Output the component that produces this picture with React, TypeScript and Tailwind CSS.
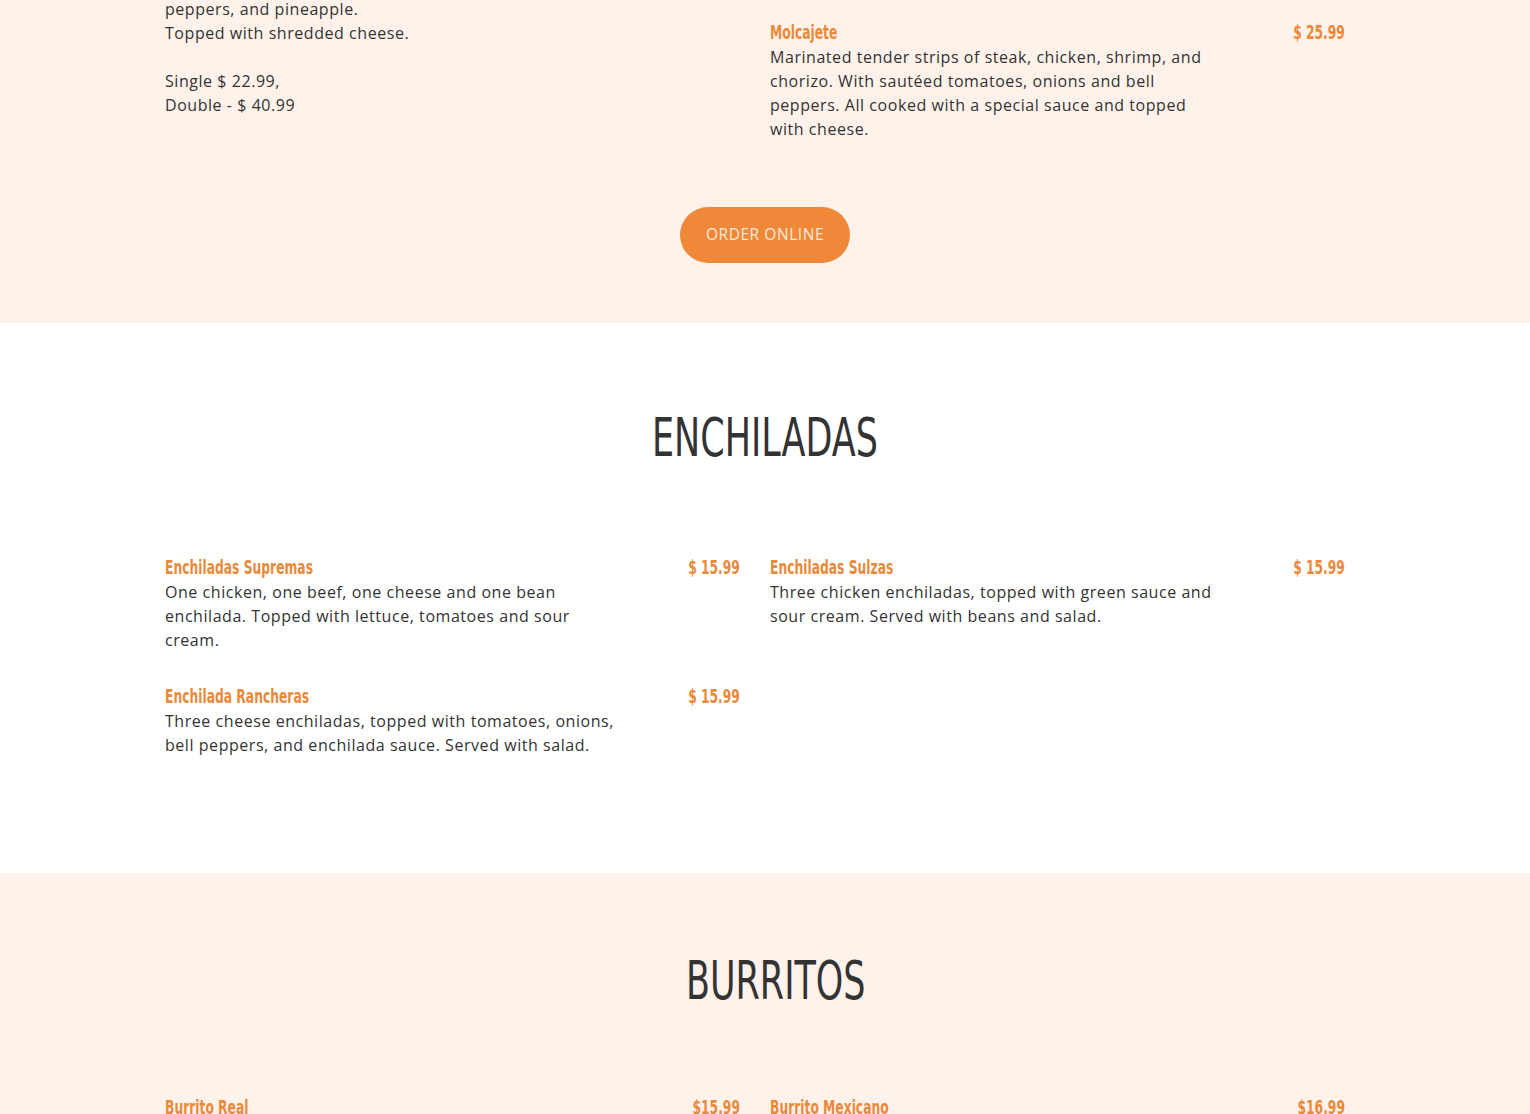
type Dish = { title: string; price: string; desc: string };

const body = "font-['Open_Sans','DejaVu_Sans',sans-serif] tracking-[0.55px]";
const cond = "font-['DejaVu_Sans',sans-serif] font-stretch-condensed";

function MenuItem({ title, price, desc }: Dish) {
  return (
    <div>
      <div className="flex items-center justify-between h-[26px]">
        <h3 className={`${cond} font-bold inline-block origin-left scale-x-[0.72] text-[19px] text-[#e98a3b] whitespace-nowrap`}>
          {title}
        </h3>
        <span className={`${cond} font-bold inline-block origin-right scale-x-[0.72] text-[19px] text-[#e98a3b] whitespace-nowrap`}>
          {price}
        </span>
      </div>
      <p className={`${body} w-[452px] text-[16px] leading-6 text-[#333]`}>{desc}</p>
    </div>
  );
}

const enchiladas: Dish[] = [
  {
    title: 'Enchiladas Supremas',
    price: '$ 15.99',
    desc: 'One chicken, one beef, one cheese and one bean enchilada. Topped with lettuce, tomatoes and sour cream.',
  },
  {
    title: 'Enchiladas Sulzas',
    price: '$ 15.99',
    desc: 'Three chicken enchiladas, topped with green sauce and sour cream. Served with beans and salad.',
  },
  {
    title: 'Enchilada Rancheras',
    price: '$ 15.99',
    desc: 'Three cheese enchiladas, topped with tomatoes, onions, bell peppers, and enchilada sauce. Served with salad.',
  },
];

const burritos: Dish[] = [
  { title: 'Burrito Real', price: '$15.99', desc: '' },
  { title: 'Burrito Mexicano', price: '$16.99', desc: '' },
];

function SectionTitle({ children, shift }: { children: string; shift?: boolean }) {
  return (
    <div className={`flex justify-center ${shift ? 'pl-[21px]' : ''}`}>
      <h2 className={`${cond} inline-block scale-x-[0.72] text-[54px] leading-[60px] text-[#333]`}>{children}</h2>
    </div>
  );
}

export default function App() {
  return (
    <div className="w-full min-h-screen bg-white overflow-hidden">
      {/* previous section tail */}
      <section className="bg-[#fff2eb] pb-[60px]">
        <div className="ml-[165px] w-[1180px] grid grid-cols-2 gap-x-[30px] -mt-[3px]">
          <div className={`${body} text-[16px] leading-6 text-[#333]`}>
            <p>peppers, and pineapple.</p>
            <p>Topped with shredded cheese.</p>
            <p className="mt-6">Single $ 22.99,</p>
            <p>Double - $ 40.99</p>
          </div>
          <div className="pt-[22px]">
            <MenuItem
              title="Molcajete"
              price="$ 25.99"
              desc="Marinated tender strips of steak, chicken, shrimp, and chorizo. With sautéed tomatoes, onions and bell peppers. All cooked with a special sauce and topped with cheese."
            />
          </div>
        </div>
        <div className="flex justify-center mt-[66px]">
          <button
            className={`${body} w-[170px] h-[56px] rounded-full bg-[#f0883a] text-[15.5px] text-[#fde9d9] uppercase`}
          >
            Order Online
          </button>
        </div>
      </section>

      <section className="bg-white pt-[85px] pb-[116px]">
        <SectionTitle>ENCHILADAS</SectionTitle>
        <div className="ml-[165px] w-[1180px] grid grid-cols-2 gap-x-[30px] gap-y-[31px] mt-[86px]">
          {enchiladas.map((d) => (
            <MenuItem key={d.title} {...d} />
          ))}
        </div>
      </section>

      <section className="bg-[#fff2eb] pt-[78px] pb-[60px]">
        <SectionTitle shift>BURRITOS</SectionTitle>
        <div className="ml-[165px] w-[1180px] grid grid-cols-2 gap-x-[30px] mt-[83px]">
          {burritos.map((d) => (
            <MenuItem key={d.title} {...d} />
          ))}
        </div>
      </section>
    </div>
  );
}
